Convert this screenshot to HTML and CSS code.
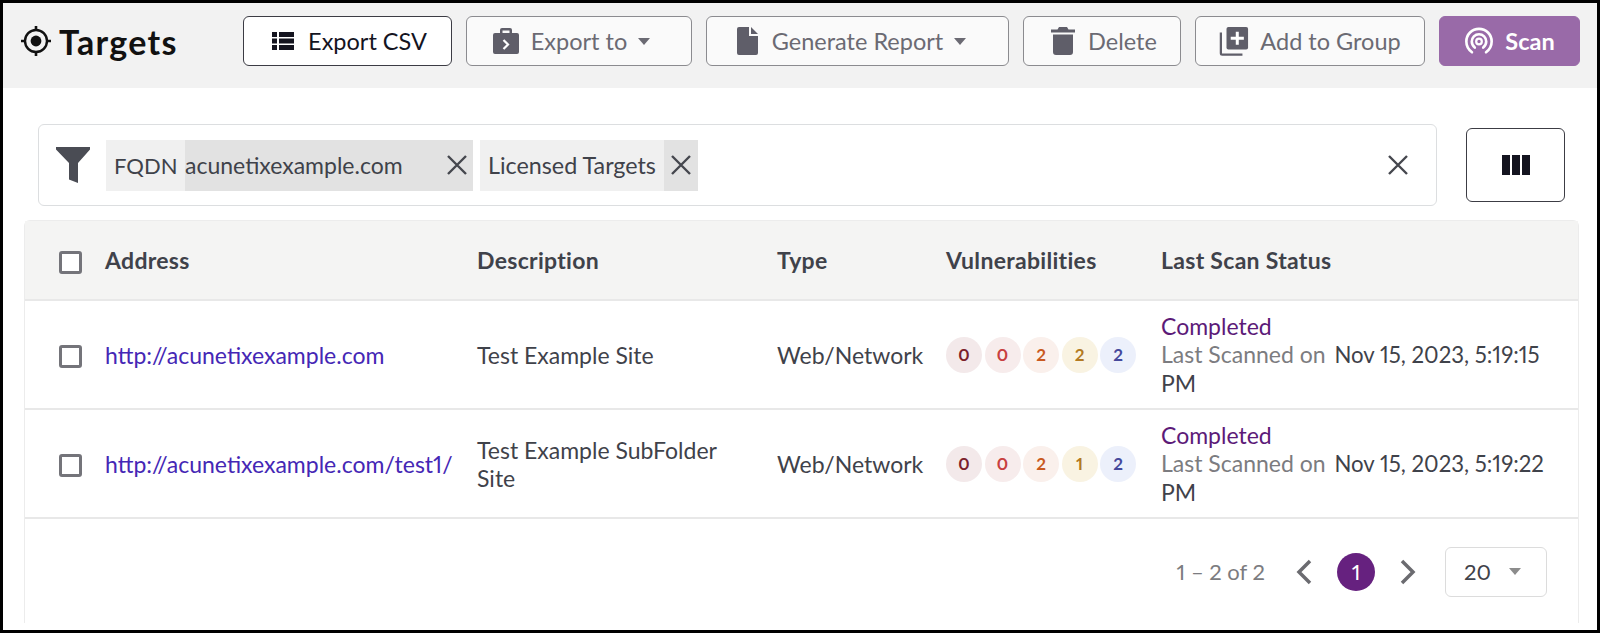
FILE: index.html
```html
<!DOCTYPE html>
<html lang="en">
<head>
<meta charset="utf-8">
<title>Targets</title>
<link rel="stylesheet" href="styles.css">
</head>
<body>
<div class="frame">
  <header class="topbar">
    <div class="title">
      <svg class="title-icon" viewBox="0 0 32 32"><circle cx="16" cy="16" r="11" fill="none" stroke="#111" stroke-width="2.4"/><circle cx="16" cy="16" r="5.400" fill="#111"/><path d="M16 1v5M16 26v5M1 16h5M26 16h5" stroke="#111" stroke-width="2.600"/></svg>
      <h1>Targets</h1>
    </div>
    <div class="actions">
      <button class="btn btn-active w-csv">
        <svg class="ico" viewBox="0 0 24 24"><path fill="#14141f" d="M1 3h5v5H1zM8 3h15v5H8zM1 9.500h5v5H1zM8 9.500h15v5H8zM1 16h5v5H1zM8 16h15v5H8z"/></svg>
        <span>Export CSV</span>
      </button>
      <button class="btn w-exp">
        <svg class="ico ico-lg" viewBox="0 0 28 28"><path fill="#5f5e69" d="M10 1h8a2 2 0 0 1 2 2v3h5a2 2 0 0 1 2 2v17a2 2 0 0 1-2 2H3a2 2 0 0 1-2-2V8a2 2 0 0 1 2-2h5V3a2 2 0 0 1 2-2zm.5 2.500V6h7V3.500z"/><path d="M11.500 13l4.500 4.500-4.500 4.500" fill="none" stroke="#fff" stroke-width="2.200"/></svg>
        <span>Export to</span><span class="caret"></span>
      </button>
      <button class="btn w-gen">
        <svg class="ico ico-lg" viewBox="0 0 28 28"><path fill="#5f5e69" d="M6 0h10v9h9v17a2 2 0 0 1-2 2H6a2 2 0 0 1-2-2V2a2 2 0 0 1 2-2zM18 0l7 7h-7z"/></svg>
        <span>Generate Report</span><span class="caret"></span>
      </button>
      <button class="btn w-del">
        <svg class="ico ico-lg" viewBox="0 0 28 28"><path fill="#5f5e69" d="M10 0h8l1.500 2.500H26v3H2v-3h6.500zM4 7.500h20V25a3 3 0 0 1-3 3H7a3 3 0 0 1-3-3z"/></svg>
        <span>Delete</span>
      </button>
      <button class="btn w-add">
        <svg class="ico ico-xl" viewBox="0 0 32 32"><path fill="#5f5e69" d="M10 1h19a2 2 0 0 1 2 2v20a2 2 0 0 1-2 2H10a2 2 0 0 1-2-2V3a2 2 0 0 1 2-2z"/><path d="M19.500 6v14M12.500 13h14" stroke="#fff" stroke-width="3.200"/><path d="M2 7v22a1.500 1.500 0 0 0 1.500 1.500H25" fill="none" stroke="#5f5e69" stroke-width="2.400"/></svg>
        <span>Add to Group</span>
      </button>
      <button class="btn btn-scan w-scan">
        <svg class="ico ico-xl" viewBox="0 0 32 32"><g fill="none" stroke="#fff" stroke-width="2.800" stroke-linecap="round"><path d="M8.500 28C4.500 25 2.500 21 2.500 16.500a13.500 13.500 0 0 1 27 0c0 4.500-2 8.500-6 11.500"/><path d="M11.500 23c-2-1.700-3.200-4-3.200-6.500a7.700 7.700 0 0 1 15.400 0c0 2.500-1.200 4.800-3.200 6.500"/></g><circle cx="16" cy="16.500" r="3" fill="none" stroke="#fff" stroke-width="2.400"/></svg>
        <span>Scan</span>
      </button>
    </div>
  </header>

  <section class="filter-row">
    <div class="filter-box">
      <svg class="funnel" viewBox="0 0 34 36"><path fill="#4a4c54" d="M0 0h34v2.500L22 16v20l-9-3.500V16L0 2.500z"/></svg>
      <div class="chip">
        <span class="chip-key">FQDN</span>
        <span class="chip-val"><span>acunetixexample.com</span>
          <svg class="x x-right" viewBox="0 0 20 20"><path d="M1 1l18 18M19 1L1 19"/></svg>
        </span>
      </div>
      <div class="chip">
        <span class="chip-key chip-key-wide">Licensed Targets</span>
        <span class="chip-close"><svg class="x" viewBox="0 0 20 20"><path d="M1 1l18 18M19 1L1 19"/></svg></span>
      </div>
      <svg class="x x-clear" viewBox="0 0 20 20"><path d="M1 1l18 18M19 1L1 19"/></svg>
    </div>
    <button class="columns-btn">
      <svg viewBox="0 0 28 20" class="columns-icon"><path fill="#14141f" d="M0 0h8v20H0zM10 0h8v20h-8zM20 0h8v20h-8z"/></svg>
    </button>
  </section>

  <section class="table">
    <div class="row row-head">
      <div class="cell"><span class="check"></span></div>
      <div class="cell">Address</div>
      <div class="cell">Description</div>
      <div class="cell">Type</div>
      <div class="cell">Vulnerabilities</div>
      <div class="cell">Last Scan Status</div>
    </div>
    <div class="row">
      <div class="cell"><span class="check"></span></div>
      <div class="cell"><a class="link" href="#">http://acunetixexample.com</a></div>
      <div class="cell">Test Example Site</div>
      <div class="cell">Web/Network</div>
      <div class="cell badges">
        <span class="badge b1">0</span><span class="badge b2">0</span><span class="badge b3">2</span><span class="badge b4">2</span><span class="badge b5">2</span>
      </div>
      <div class="cell status"><div class="done">Completed</div><div><span class="muted">Last Scanned on</span> <span class="date">Nov 15, 2023, 5:19:15</span> <span class="date-end">PM</span></div></div>
    </div>
    <div class="row">
      <div class="cell"><span class="check"></span></div>
      <div class="cell"><a class="link" href="#">http://acunetixexample.com/test1/</a></div>
      <div class="cell desc">Test Example SubFolder Site</div>
      <div class="cell">Web/Network</div>
      <div class="cell badges">
        <span class="badge b1">0</span><span class="badge b2">0</span><span class="badge b3">2</span><span class="badge b4">1</span><span class="badge b5">2</span>
      </div>
      <div class="cell status"><div class="done">Completed</div><div><span class="muted">Last Scanned on</span> <span class="date">Nov 15, 2023, 5:19:22</span> <span class="date-end">PM</span></div></div>
    </div>
    <div class="pager">
      <span class="range">1 – 2 of 2</span>
      <svg class="chev" viewBox="0 0 18 26"><path d="M15 2L4 13l11 11"/></svg>
      <span class="page">1</span>
      <svg class="chev" viewBox="0 0 18 26"><path d="M3 2l11 11L3 24"/></svg>
      <span class="size">20 <span class="caret caret-grey"></span></span>
    </div>
  </section>
</div>
</body>
</html>
```
FILE: styles.css
```css
* { box-sizing: border-box; }
html, body { margin: 0; height: 100%; }
body { font-family: "Lato", "Liberation Sans", sans-serif; font-size: 23px; color: #3f424a; background: #fff; font-variant-numeric: proportional-nums; }
.frame { height: 633px; border: 3px solid #000; background: #fff; overflow: hidden; }

.topbar { height: 85px; background: #f2f2f2; display: flex; padding: 13px 0 0 17px; }
.title { display: flex; align-items: center; height: 50px; width: 223px; gap: 7px; }
.title-icon { width: 32px; height: 32px; }
h1 { margin: 0; font-size: 34px; font-weight: 700; color: #111; letter-spacing: 1.300px; }
.actions { display: flex; gap: 14px; }

.btn { height: 50px; display: flex; align-items: center; justify-content: center; gap: 11px; font: inherit; font-size: 23.500px; color: #6b6a73; background: #fafafa; border: 1px solid #8b8b8f; border-radius: 6px; padding: 0; }
.btn-active { background: #fff; color: #14141f; border-color: #3c3c44; }
.btn-scan { background: #996aa8; border-color: #996aa8; color: #fff; font-weight: 700; }
.w-csv { width: 209px; gap: 13px; padding-left: 3px; }
.w-exp { width: 226px; padding-right: 16px; }
.w-gen { width: 303px; padding-right: 16px; }
.w-del { width: 158px; padding-left: 2px; }
.w-add { width: 230px; }
.w-scan { width: 141px; }
.ico { width: 24px; height: 24px; }
.ico-lg { width: 28px; height: 28px; }
.ico-xl { width: 30px; height: 30px; }
.caret { display: inline-block; width: 0; height: 0; border: 6.500px solid transparent; border-top: 7px solid #6b6a73; border-bottom: 0; }
.caret-grey { border-top-color: #8c8c8c; margin-left: 18px; }

.filter-row { display: flex; align-items: center; padding: 36px 0 0 35px; gap: 29px; }
.filter-box { width: 1399px; height: 82px; border: 1px solid #dcdee0; border-radius: 6px; display: flex; align-items: center; padding: 0 0 0 17px; }
.funnel { width: 34px; height: 36px; margin-right: 16px; }
.chip { height: 51px; display: flex; margin-right: 7px; background: #f0f0f0; }
.chip-key { display: flex; align-items: center; padding: 0 8px; width: 79px; font-size: 22px; }
.chip-key-wide { width: auto; font-size: 23.300px; }
.chip-val { display: flex; align-items: center; background: #e2e2e2; width: 288px; }
.chip-close { width: 34px; background: #e2e2e2; display: flex; align-items: center; justify-content: center; }
.x { width: 20px; height: 20px; fill: none; stroke: #45474e; stroke-width: 2.400; }
.x-right { margin-left: auto; margin-right: 6px; }
.x-clear { margin-left: auto; margin-right: 28px; }
.columns-btn { width: 99px; height: 74px; background: #fff; border: 1px solid #3c3c44; border-radius: 6px; display: flex; align-items: center; justify-content: center; padding: 0; }
.columns-icon { width: 28px; height: 20px; }

.table { margin: 14px 18px 0 21px; border: 1px solid #ececec; border-bottom: 0; border-radius: 6px 6px 0 0; height: 403px; }
.row { display: grid; grid-template-columns: 80px 372px 300px 169px 215px 1fr; height: 109px; border-bottom: 2px solid #e8e8e8; align-items: center; }
.row-head { height: 80px; background: #f4f4f3; font-weight: 700; letter-spacing: 0.300px; }
.check { display: block; width: 23px; height: 23px; margin: 4px 0 0 34px; border: 3px solid #74747a; border-radius: 3px; background: #fff; }
.link { color: #4527b5; text-decoration: none; }
.desc, .status { line-height: 28px; }
.desc { padding-right: 30px; }
.status { padding-right: 20px; }
.done { color: #5c1a78; }
.muted { color: #7c7c80; }
.date { font-size: 22.200px; margin-left: 3px; white-space: nowrap; }
.badges { display: flex; gap: 2.500px; }
.badge { width: 36px; height: 36px; border-radius: 50%; display: flex; align-items: center; justify-content: center; font-size: 17px; font-weight: 700; }
.b1 { background: #f3e9ea; color: #7c1f2c; }
.b2 { background: #f7ecec; color: #c8403f; }
.b3 { background: #faf0ec; color: #c9591f; }
.b4 { background: #f9f3e2; color: #b37a22; }
.b5 { background: #ecf0fb; color: #45489b; }

.pager { display: flex; align-items: center; justify-content: flex-end; height: 105px; padding: 0 31px 0 0; color: #7c7c80; font-size: 22px; }
.chev { width: 18px; height: 26px; fill: none; stroke: #6b6b70; stroke-width: 3.500; }
.range { margin-right: 30px; }
.page { width: 38px; height: 38px; margin: 0 24px; border-radius: 50%; background: #66217f; color: #fff; display: flex; align-items: center; justify-content: center; }
.size { width: 102px; height: 50px; margin-left: 28px; border: 1px solid #dcdcdc; border-radius: 6px; display: flex; align-items: center; padding-left: 18px; color: #3f424a; font-size: 22px; }
```
